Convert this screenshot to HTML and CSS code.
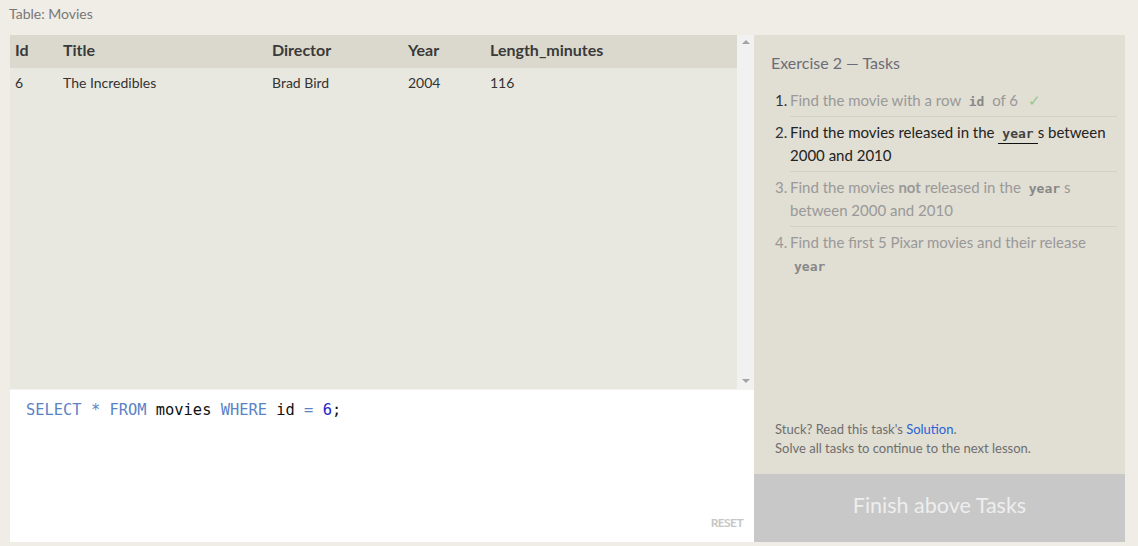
FILE: index.html
```html
<!DOCTYPE html>
<html>
<head>
<meta charset="utf-8">
<link rel="stylesheet" href="styles.css">
</head>
<body>
<div class="page">
  <div class="caption">Table: Movies</div>
  <div class="main">
    <div class="left">
      <div class="results">
        <div class="table-wrap">
          <table class="grid">
            <thead>
              <tr><th class="c-id">Id</th><th class="c-title">Title</th><th class="c-dir">Director</th><th class="c-year">Year</th><th>Length_minutes</th></tr>
            </thead>
            <tbody>
              <tr><td>6</td><td>The Incredibles</td><td>Brad Bird</td><td>2004</td><td>116</td></tr>
            </tbody>
          </table>
        </div>
        <div class="scrollbar">
          <span class="arrow up"></span>
          <span class="arrow down"></span>
        </div>
      </div>
      <div class="editor">
        <div class="code"><span class="kw">SELECT</span> <span class="kw">*</span> <span class="kw">FROM</span> movies <span class="kw">WHERE</span> id <span class="kw">=</span> <span class="num">6</span>;</div>
        <div class="reset">RESET</div>
      </div>
    </div>
    <div class="right">
      <div class="tasks">
        <div class="tasks-title">Exercise 2 — Tasks</div>
        <ol class="task-list">
          <li class="task done"><span class="n">1.</span><span class="t">Find the movie with a row <code>id</code> of 6 <span class="check">✓</span></span></li>
          <li class="task active"><span class="n">2.</span><span class="t">Find the movies released in the <code>year</code>s between 2000 and 2010</span></li>
          <li class="task"><span class="n">3.</span><span class="t">Find the movies <b>not</b> released in the <code>year</code>s between 2000 and 2010</span></li>
          <li class="task last"><span class="n">4.</span><span class="t">Find the first 5 Pixar movies and their release <code>year</code></span></li>
        </ol>
        <div class="help">
          <div>Stuck? Read this task's <a class="link">Solution</a>.</div>
          <div>Solve all tasks to continue to the next lesson.</div>
        </div>
      </div>
      <div class="finish">Finish above Tasks</div>
    </div>
  </div>
</div>
</body>
</html>
```
FILE: styles.css
```css
html, body {
  margin: 0;
  padding: 0;
  background: #f0ede6;
}
body {
  font-family: Lato, "Open Sans", sans-serif;
  width: 1138px;
  height: 546px;
  overflow: hidden;
}
.page {
  padding: 0 13px 4px 10px;
}
.caption {
  height: 35px;
  line-height: 28px;
  font-size: 14px;
  color: #777;
  margin-left: -1px;
}
.main {
  display: flex;
  height: 507px;
}
.left {
  width: 744px;
  display: flex;
  flex-direction: column;
}
.results {
  height: 354px;
  display: flex;
  background: #e9e8e0;
  border-bottom: 1px solid #f3f2ee;
}
.table-wrap {
  flex: 1;
}
.grid {
  width: 100%;
  table-layout: fixed;
  border-collapse: collapse;
  font-size: 14px;
  color: #333;
}
.grid th {
  background: #dbd9ce;
  text-align: left;
  font-weight: 700;
  font-size: 16px;
  height: 33px;
  padding: 0 0 4px 5px;
  box-sizing: border-box;
  color: #3a3a3a;
}
.grid td {
  height: 29px;
  padding: 0 0 0 5px;
  vertical-align: middle;
}
.grid .c-id { width: 48px; }
.grid .c-title { width: 209px; }
.grid .c-dir { width: 136px; }
.grid .c-year { width: 82px; }
.scrollbar {
  width: 17px;
  background: #f1f1f1;
  position: relative;
}
.arrow {
  position: absolute;
  left: 5px;
  width: 0;
  height: 0;
  border-left: 4px solid transparent;
  border-right: 4px solid transparent;
}
.arrow.up {
  top: 5px;
  border-bottom: 4px solid #a3a3a3;
}
.arrow.down {
  bottom: 6px;
  border-top: 4px solid #a3a3a3;
}
.editor {
  flex: 1;
  background: #fff;
  position: relative;
}
.code {
  font-family: "DejaVu Sans Mono", monospace;
  font-size: 15.4px;
  color: #111;
  padding: 10px 0 0 16px;
  line-height: 20px;
}
.kw { color: #5a83c6; }
.num { color: #1e24c8; }
.reset {
  position: absolute;
  right: 11px;
  bottom: 12px;
  font-size: 12px;
  font-weight: 700;
  color: #c6c6c6;
  letter-spacing: -0.6px;
}
.right {
  width: 371px;
  display: flex;
  flex-direction: column;
}
.tasks {
  flex: 1;
  background: #e1ded3;
  padding: 18px 8px 0 17px;
  display: flex;
  flex-direction: column;
}
.tasks-title {
  font-size: 16px;
  color: #6c6c78;
  line-height: 20px;
  margin-bottom: 12px;
}
.task-list {
  list-style: none;
  margin: 0;
  padding: 0;
  flex: 1;
}
.task {
  display: flex;
  font-size: 15px;
  line-height: 23px;
  color: #999;
}
.task .n {
  width: 15px;
  flex: none;
  margin-left: 4px;
  padding-top: 4px;
  color: #333;
}
.task .t {
  flex: 1;
  border-bottom: 1px solid #d3d0c5;
  padding: 4px 0 4px;
}
.task.last .t { border-bottom: none; }
.task:not(.done):not(.active) .n { color: #999; }
.task.active { color: #222; }
.task code {
  font-family: "DejaVu Sans Mono", monospace;
  font-weight: 700;
  font-size: 13px;
  line-height: 1;
  color: #888;
  padding: 0 4px;
}
.task.active code {
  color: #444;
  border-bottom: 1px solid #111;
  padding-bottom: 2px;
}
.task.last code {
  display: inline-block;
  margin-top: 4px;
}
.check {
  color: #8fc98f;
  margin-left: 6px;
}
.help {
  font-size: 13px;
  color: #6e6e6e;
  line-height: 19px;
  padding: 0 0 16px 4px;
}
.link { color: #2a62d4; }
.finish {
  height: 68px;
  box-sizing: border-box;
  padding-bottom: 6px;
  background: #c8c8c8;
  color: #eeeeee;
  font-size: 21.5px;
  display: flex;
  align-items: center;
  justify-content: center;
}
```
